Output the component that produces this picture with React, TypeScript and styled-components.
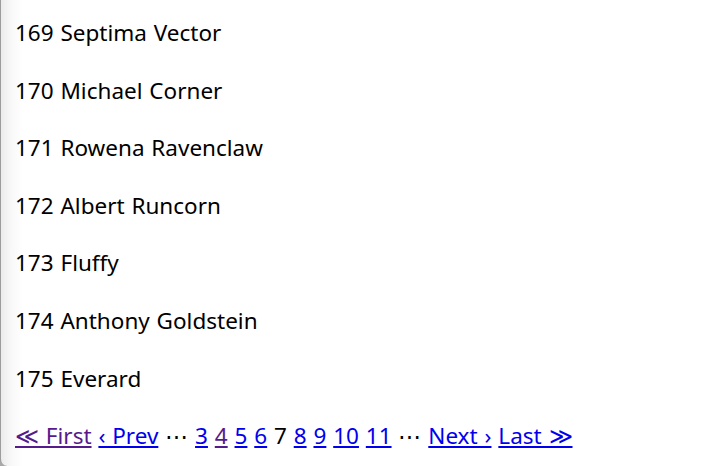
import styled, { createGlobalStyle } from 'styled-components';

type PageLink = {
    label: string;
    visited?: boolean;
    current?: boolean;
    gap?: boolean;
};

const names = [
    '169 Septima Vector',
    '170 Michael Corner',
    '171 Rowena Ravenclaw',
    '172 Albert Runcorn',
    '173 Fluffy',
    '174 Anthony Goldstein',
    '175 Everard',
];

const pages: PageLink[] = [
    { label: '\u226A First', visited: true },
    { label: '\u2039 Prev' },
    { label: '\u22EF', gap: true },
    { label: '3' },
    { label: '4', visited: true },
    { label: '5' },
    { label: '6' },
    { label: '7', current: true },
    { label: '8' },
    { label: '9' },
    { label: '10' },
    { label: '11' },
    { label: '\u22EF', gap: true },
    { label: 'Next \u203A' },
    { label: 'Last \u226B' },
];

const App = () => {
    return (
        <>
            <GlobalStyle />
            <Frame>
                <List>
                    {names.map((name) => (
                        <Item key={name}>{name}</Item>
                    ))}
                    <Pager>
                        {pages.map((page, index) => (
                            <span key={index}>
                                {page.gap || page.current ? (
                                    <PlainText>{page.label}</PlainText>
                                ) : (
                                    <PageAnchor href="#" $visited={page.visited}>
                                        {page.label}
                                    </PageAnchor>
                                )}
                                {index < pages.length - 1 ? ' ' : ''}
                            </span>
                        ))}
                    </Pager>
                </List>
            </Frame>
        </>
    );
};

export default App;

const GlobalStyle = createGlobalStyle`
    html, body {
        margin: 0;
        padding: 0;
        height: 100%;
        background: #a9a9a9;
        overflow: hidden;
    }
    #root {
        height: 100%;
    }
`;

const Frame = styled.div`
    box-sizing: border-box;
    height: 100%;
    border-left: 1px solid #9c9c9c;
    border-bottom-left-radius: 7px;
    background: linear-gradient(to right, #ebebeb 0px, #f8f8f8 10px, #ffffff 22px);
    overflow: hidden;
`;

const List = styled.div`
    padding: 4px 0 0 14px;
    font-family: 'Noto Sans', 'Liberation Sans', sans-serif;
    font-size: 22.5px;
    word-spacing: 1px;
    color: #000;
`;

const Item = styled.div`
    line-height: 57.6px;
`;

const Pager = styled.div`
    line-height: 57.6px;
    white-space: nowrap;
`;

const PlainText = styled.span`
    color: #000;
`;

const PageAnchor = styled.a<{ $visited?: boolean }>`
    color: ${(props) => (props.$visited ? '#551a8b' : '#0000ee')};
    text-decoration: underline;
`;
